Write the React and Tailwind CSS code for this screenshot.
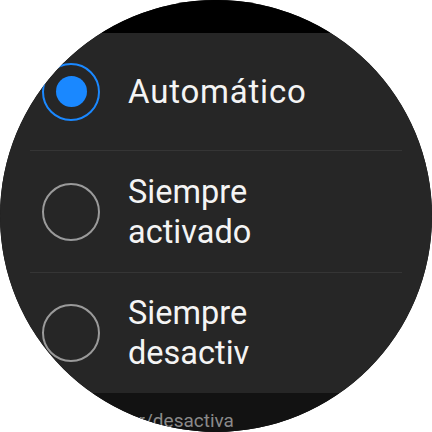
export default function App() {
  const font = { fontFamily: 'Roboto, "Noto Sans", sans-serif' };
  return (
    <div className="w-[432px] h-[432px] bg-white" style={font}>
      <div className="w-[432px] h-[432px] rounded-full overflow-hidden bg-black flex flex-col">
        <div className="h-[33px] shrink-0 bg-black" />
        <div className="bg-[#262626] flex flex-col shrink-0">
          <div className="h-[117px] flex items-center pl-[42px]">
            <div className="w-[58px] h-[58px] rounded-full border-2 border-[#1a88ff] flex items-center justify-center shrink-0">
              <div className="w-[31px] h-[31px] rounded-full bg-[#1a88ff]" />
            </div>
            <div className="ml-[28px] text-[33px] leading-[40px] tracking-[0.8px] text-[#f4f4f4]">Automático</div>
          </div>
          <div className="mx-[30px] h-px bg-[#353535]" />
          <div className="h-[121px] flex items-center pl-[42px]">
            <div className="w-[58px] h-[58px] rounded-full border-2 border-[#9a9a9a] shrink-0" />
            <div className="ml-[28px] text-[32.5px] leading-[40px] text-[#f4f4f4]">
              Siempre<br />activado
            </div>
          </div>
          <div className="mx-[30px] h-px bg-[#353535]" />
          <div className="h-[120px] flex items-center pl-[42px]">
            <div className="w-[58px] h-[58px] rounded-full border-2 border-[#9a9a9a] shrink-0" />
            <div className="ml-[28px] text-[32.5px] leading-[40px] text-[#f4f4f4]">
              Siempre<br />desactiv
            </div>
          </div>
        </div>
        <div className="flex-1 bg-[#121212] pt-[16px] flex">
          <div className="w-[145px] shrink-0 text-right text-[19px] leading-[24px] text-[#8a8a8a] overflow-hidden whitespace-nowrap flex justify-end">
            <span>Activar</span>
          </div>
          <div className="text-[19px] leading-[24px] text-[#8a8a8a] whitespace-nowrap">/desactiva</div>
        </div>
      </div>
    </div>
  );
}
